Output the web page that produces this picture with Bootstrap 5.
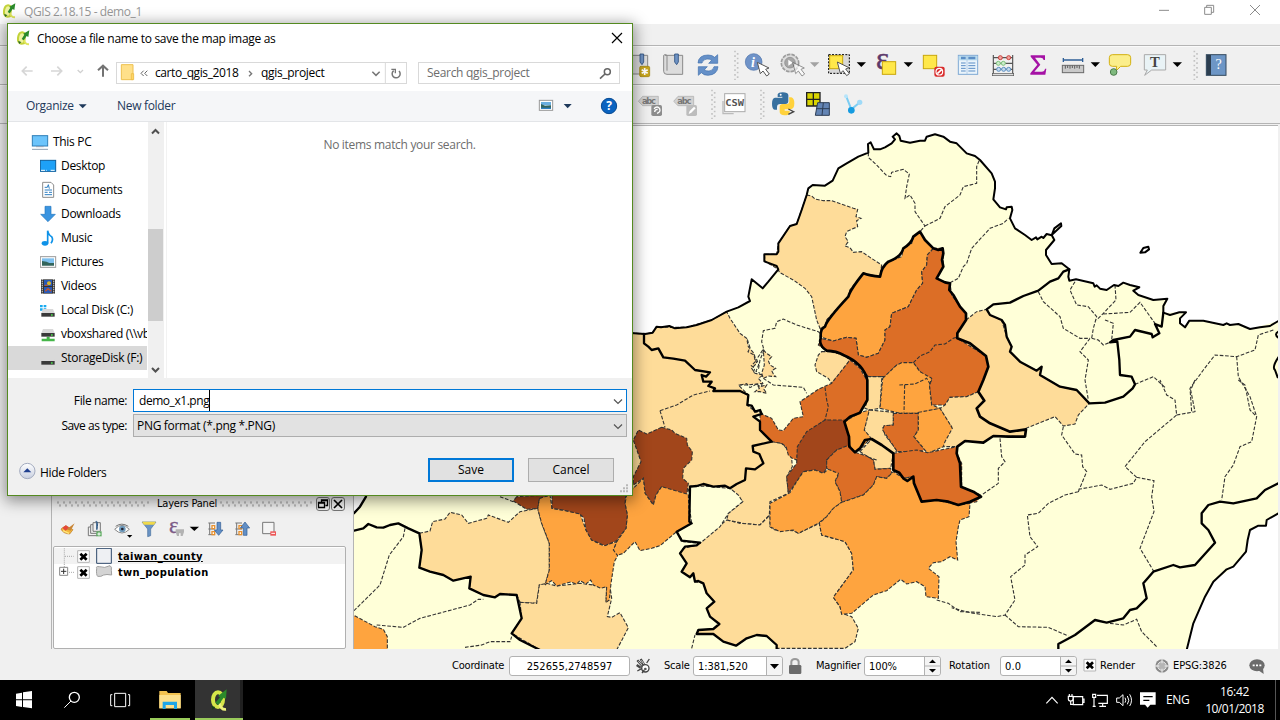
<!DOCTYPE html>
<html lang="en">
<head>
<meta charset="utf-8">
<title>QGIS 2.18.15 - demo_1</title>
<meta name="viewport" content="width=device-width, initial-scale=1">
<link href="https://cdn.jsdelivr.net/npm/bootstrap@5.3.0/dist/css/bootstrap.min.css" rel="stylesheet">
<style>
body{width:1280px;height:720px;overflow:hidden;background:#f0f0f0;color:#000;font:12px/16px "Open Sans","Noto Sans",sans-serif}
svg{display:block;flex:none}
.seg{letter-spacing:-.31px;white-space:nowrap}
.tah{font-family:"DejaVu Sans Condensed","DejaVu Sans",sans-serif;font-stretch:condensed;font-size:11px;letter-spacing:-.2px;white-space:nowrap}
.titlebar{height:24px;background:#fff;color:#999}
.menubar{height:22px;border-bottom:1px solid #b4b4b4}
.toolrow{height:39px;border-bottom:1px solid #b4b4b4;border-top:1px solid #fafafa;padding-left:633px}
.toolrow .btn{border:0;border-radius:0;padding:0;flex:none}
.mainrow{height:525px;padding-right:2px}
.leftcol{width:354px;padding-left:51px;border-right:1px solid #b4b4b4}
.dock{border-left:1px solid #b4b4b4;width:295px}
.docktitle{height:19px}
.dots{height:6px;flex:1 1 0;background-image:radial-gradient(circle at 2px 1.5px,#bbb 1px,transparent 1.3px),radial-gradient(circle at 4px 4.5px,#bbb 1px,transparent 1.3px);background-size:6px 6px}
.dockbtn{width:14px;height:14px;border:1px solid #777;border-radius:3px;margin-right:1px}
.tree{height:103px;width:293px;margin-left:1px;background:#fff;border:1px solid #b0b0b0;border-radius:2px;padding-top:1px}
.trow{height:16px;font-weight:700;padding-left:1px}
.trow .tah{letter-spacing:.33px;padding-top:1px}
.mapframe{border-top:1px solid #b4b4b4;margin-top:1px;background:#fff}
.status{height:31px;padding-top:2px}
.qbox{height:20px;background:#fff;border:1px solid #b2b2b2;border-radius:3px;line-height:19px}
.spin{width:16px;border-left:1px solid #b2b2b2;background:#f4f4f4;border-radius:0 3px 3px 0}
.task{height:40px;background:#000;color:#fff}
.run{border-bottom:2px solid #9acb5b}
.dlg{position:absolute;left:7px;top:23px;width:626px;height:473px;background:#fff;border:1px solid #548a20;box-shadow:0 3px 14px 2px rgba(0,0,0,.42)}
.dtitle{height:29px}
.dnav{height:38px;padding-left:12px}
.addr{height:22px;border:1px solid #d9d9d9;margin-top:1px}
.cmd{height:31px;background:#f5f6f8;border-bottom:1px solid #e3e5e8;color:#1e395b}
.dbody{height:256px}
.navtree{width:140px;padding-top:8px;overflow:hidden}
.nitem{height:24px;width:139px;padding-left:32px;overflow:hidden}
.sbar{width:16px;background:#f0f0f0}
.thumb{width:15px;height:92px;background:#cdcdcd;margin-top:107px}
.files{border-left:1px solid #f2f2f2;margin-left:2px}
.dfoot{height:117px;background:#f0f0f0}
.flabel{width:119px;text-align:right;margin-right:6px;letter-spacing:-.5px}
.fbox{width:494px;height:23px;line-height:20px}
.fname{border:1px solid #0078d7;background:#fff}
.ftype{border:1px solid #adadad;background:#e2e2e2}
.wbtn{width:86px;height:24px;background:#e1e1e1;border:1px solid #adadad;border-radius:0;padding:0;font-size:12px;line-height:20px;color:#000}
.wbtn.dflt{border:2px solid #0078d7}
.land{fill:#ffffd8}.c1{fill:#fedc99}.c2{fill:#fea43f}.c3{fill:#dc6e26}.c4{fill:#a2461b}
.reg path{stroke:#333;stroke-width:3.3;stroke-dasharray:11 5}
.dash{fill:none;stroke:#333;stroke-width:3.3;stroke-dasharray:11 5}
.thick{fill:none;stroke:#000;stroke-width:6;stroke-linejoin:round;stroke-linecap:round}
</style>
</head>
<body class="d-flex flex-column m-0">

<!-- main window title -->
<header class="titlebar d-flex align-items-center seg">
  <svg width="20" height="24" viewBox="0 0 60 72"><use href="#qlogo" x="-1" y="0"/></svg>
  <span class="ps-1" style="letter-spacing:-.4px">QGIS 2.18.15 - demo_1</span>
  <svg class="ms-auto" width="135" height="24" viewBox="585 0 405 72" fill="none" stroke="#8c8c8c" stroke-width="3"><path d="M627 31h30M764 22h20v21h-20zM770 22v-6h21v21h-7M900 15l30 30M930 15l-30 30"/></svg>
</header>
<div class="menubar"></div>

<!-- toolbars -->
<div class="toolrow d-flex">
  <button class="btn"><svg width="22" height="37" viewBox="9 141 66 111"><path d="M-10 166h63v56h-63z" fill="#ddd" stroke="#888" stroke-width="3"/><path d="M30 162h11v24l-5 8-6-8z" fill="#6f93c4" stroke="#2d4f80" stroke-width="2.5"/><rect x="29" y="199" width="30" height="31" rx="4" fill="#c8a51c" stroke="#9c7d08" stroke-width="2"/><path d="M44 204v21M35 209l18 11M53 209l-18 11" stroke="#fff" stroke-width="5"/></svg></button>
  <button class="btn"><svg width="35" height="37" viewBox="75 141 105 111"><path d="M105 166h53v57h-47q-10 0-10-9v-48q4-5 10 0v46" fill="#dcdcdc" stroke="#8a8a8a" stroke-width="3"/><path d="M134 162h11v24l-5 8-6-8z" fill="#6f93c4" stroke="#2d4f80" stroke-width="2.5"/></svg></button>
  <button class="btn"><svg width="40" height="37" viewBox="180 141 120 111"><g fill="#6590c8" stroke="#3f6fae" stroke-width="2"><path d="M204 189q2-24 30-24 13 0 20 7l9-8v26h-27l9-9q-7-5-14-4-13 1-15 12z"/><path d="M264 200q-2 24-30 26-13 0-20-8l-9 8v-26h27l-9 9q7 5 14 4 13-1 15-13z"/></g></svg></button>
  <svg width="12" height="37" viewBox="300 141 36 111"><use href="#grip" x="312" y="151"/></svg>
  <button class="btn"><svg width="33" height="37" viewBox="336 141 99 111"><circle cx="371" cy="186" r="25" fill="#6f93c8" stroke="#4d73ab" stroke-width="2"/><text x="363" y="200" font-family="Liberation Serif" font-weight="700" font-style="italic" font-size="42" fill="#fff">i</text><use href="#cur" x="382" y="187"/></svg></button>
  <button class="btn"><svg width="47" height="37" viewBox="435 141 141 111"><circle cx="480" cy="189" r="26" fill="#ddd" stroke="#9b9b9b" stroke-width="5" stroke-dasharray="11 3"/><circle cx="480" cy="188" r="16" fill="#a6a6a6" stroke="#888" stroke-width="2"/><path d="M475 179l13 9-13 9z" fill="#fff"/><g opacity=".6"><use href="#cur" x="488" y="187"/></g><path d="M540 187h28l-14 14z" fill="#a3a3a3"/></svg></button>
  <button class="btn"><svg width="47" height="37" viewBox="576 141 141 111"><rect x="596" y="164" width="62" height="56" fill="#d8d8d8" stroke="#000" stroke-width="3" stroke-dasharray="6 4"/><rect x="599" y="167" width="39" height="39" fill="#ffe84a" stroke="#c9a70c" stroke-width="3"/><use href="#cur" x="622" y="186"/><path d="M680 187h28l-14 14z"/></svg></button>
  <button class="btn"><svg width="47" height="37" viewBox="717 141 141 111"><text x="738" y="206" font-family="Liberation Serif" font-size="92" fill="#5d3a6b" stroke="#5d3a6b" stroke-width="1.500">ε</text><rect x="757" y="185" width="40" height="38" fill="#ffe84a" stroke="#c9a70c" stroke-width="3"/><path d="M821 187h28l-14 14z"/></svg></button>
  <button class="btn"><svg width="35" height="37" viewBox="858 141 105 111"><rect x="880" y="166" width="40" height="40" fill="#ffe84a" stroke="#c9a70c" stroke-width="3"/><rect x="913" y="200" width="31" height="30" rx="6" fill="#d92b2b"/><circle cx="928" cy="215" r="10" fill="none" stroke="#fff" stroke-width="3.5"/><path d="M922 221l13-12" stroke="#fff" stroke-width="5"/></svg></button>
  <button class="btn"><svg width="35" height="37" viewBox="3 141 105 111"><rect x="25" y="166" width="58" height="57" fill="#eaf4fb" stroke="#7fa9d4" stroke-width="3"/><path d="M26 168h56v13H26z" fill="#b9dcee"/><path d="M33 174h14M55 174h21" stroke="#5b8dc5" stroke-width="7"/><path d="M51 168v54" stroke="#9cc0e2" stroke-width="2"/><path d="M33 189h14M33 197h14M33 205h14M33 213h14M55 189h21M55 197h21M55 205h21M55 213h21" stroke="#5b8dc5" stroke-width="3"/></svg></button>
  <button class="btn"><svg width="35" height="37" viewBox="108 141 105 111"><path d="M130 165v57M188 165v57M130 173h58M130 190h58M130 208h58" stroke="#555" stroke-width="3.5"/><rect x="127" y="220" width="64" height="7" fill="#ddd" stroke="#555" stroke-width="2"/><g stroke-width="3"><g fill="#f2a3a0" stroke="#c9413b"><circle cx="151" cy="173" r="6"/><circle cx="176" cy="173" r="6"/></g><g fill="#cdeccb" stroke="#7dc37c"><circle cx="145" cy="190" r="6"/><circle cx="160" cy="190" r="6"/></g><g fill="#c3d9ee" stroke="#5b8fc2"><circle cx="146" cy="208" r="6"/><circle cx="161" cy="208" r="6"/><circle cx="176" cy="208" r="6"/></g></g></svg></button>
  <button class="btn"><svg width="35" height="37" viewBox="213 141 105 111"><path d="M242 166h43v14h-4q-2-7-9-7h-17l16 21-18 21h22q9 0 10-9h4l-3 18h-45v-4l21-26-20-24z" fill="#a512a5"/></svg></button>
  <button class="btn"><svg width="47" height="37" viewBox="318 141 141 111"><path d="M340 174v12M398 174v12M340 180h58" stroke="#2f5f96" stroke-width="4"/><rect x="337" y="196" width="64" height="22" fill="#c9c9c9" stroke="#6a6a6a" stroke-width="3"/><path d="M346 197v9M353 197v7M360 197v9M367 197v7M374 197v9M381 197v7M388 197v9" stroke="#444" stroke-width="2.5"/><path d="M422 187h28l-14 14z"/></svg></button>
  <button class="btn"><svg width="35" height="37" viewBox="459 141 105 111"><path d="M487 164h46q9 0 9 9v17q0 9-9 9h-21l-14 14 2-14h-13q-9 0-9-9v-17q0-9 9-9z" fill="#fbee8b" stroke="#d3b00f" stroke-width="3"/><circle cx="491" cy="216" r="10" fill="#7fb97e" stroke="#4b7c4b" stroke-width="3"/></svg></button>
  <button class="btn"><svg width="47" height="37" viewBox="564 141 141 111"><path d="M583 164h64v46h-42l-21 16 8-16h-9z" fill="#e9f3f6" stroke="#a9a9a9" stroke-width="3"/><text x="615" y="201" text-anchor="middle" font-family="Liberation Serif" font-weight="700" font-size="44" fill="#444">T</text><path d="M668 187h28l-14 14z"/></svg></button>
  <svg width="15" height="37" viewBox="705 141 45 111"><use href="#grip" x="730" y="151"/></svg>
  <button class="btn"><svg width="35" height="37" viewBox="750 141 105 111"><rect x="769" y="164" width="59" height="62" fill="#6d96c6" stroke="#34495e" stroke-width="3"/><path d="M770 165h13v60h-13z" fill="#2c3e50"/><text x="806" y="208" text-anchor="middle" font-family="Liberation Serif" font-size="42" fill="#fff">?</text></svg></button>
</div>
<div class="toolrow d-flex">
  <button class="btn"><svg width="33" height="37" viewBox="9 258 99 111"><path d="M25 304l13-15h47v28H38z" fill="#d2d2d2" stroke="#aaa" stroke-width="2"/><text x="36" y="312" font-family="DejaVu Sans" font-weight="700" font-size="25" textLength="42" fill="#777">abc</text><rect x="64" y="315" width="32" height="33" rx="5" fill="#8d8d8d"/><path d="M72 326q10-10 17 0 4 10-8 14M74 336q0-8 9-8" fill="none" stroke="#fff" stroke-width="4"/></svg></button>
  <button class="btn"><svg width="42" height="37" viewBox="108 258 126 111"><path d="M131 304l13-15h47v28h-47z" fill="#d2d2d2" stroke="#aaa" stroke-width="2"/><text x="142" y="312" font-family="DejaVu Sans" font-weight="700" font-size="25" textLength="42" fill="#777">abc</text><rect x="169" y="315" width="32" height="33" rx="5" fill="#bdbdbd"/><path d="M176 342l3-9 13-13 5 5-13 13z" fill="#fff"/></svg></button>
  <svg width="12" height="37" viewBox="234 258 36 111"><use href="#grip" x="243" y="268"/></svg>
  <button class="btn"><svg width="38" height="37" viewBox="270 258 114 111"><path d="M279 303v38h32" fill="none" stroke="#bbb" stroke-width="4"/><rect x="284" y="281" width="61" height="54" fill="#fff" stroke="#aaa" stroke-width="3"/><text x="286" y="318" font-family="DejaVu Sans Mono" font-weight="700" font-size="28" textLength="56" lengthAdjust="spacingAndGlyphs" fill="#555">CSW</text></svg></button>
  <svg width="10" height="37" viewBox="384 258 30 111"><use href="#grip" x="390" y="268"/></svg>
  <button class="btn"><svg width="35" height="37" viewBox="414 258 105 111"><path d="M443 291v-8q2-6 15-6 16 0 17 8v18q0 9-9 9h-15q-10 0-10 10v7h-7q-8-2-8-18 0-17 9-18h22v-3z" fill="#37709f"/><path d="M477 292h7q9 3 9 18 0 16-10 18h-19v4h15v7q-2 7-15 7-15-1-15-10v-16q0-8 9-8h12q8 0 8-10z" fill="#ffd23c"/><circle cx="452" cy="284" r="3" fill="#fff"/><path d="M475 327l16 8-16 8" fill="none" stroke="#444" stroke-width="4"/></svg></button>
  <button class="btn"><svg width="35" height="37" viewBox="519 258 105 111"><path d="M530 278h40v40h-40z" fill="#d9d400" stroke="#222" stroke-width="4"/><path d="M550 278v40M530 298h40" stroke="#222" stroke-width="4"/><path d="M563 308h35v38h-42z" fill="#6384b4" stroke="#2d3d55" stroke-width="3"/><path d="M580 308l-4 38M559 326h40" stroke="#2d3d55" stroke-width="3"/></svg></button>
  <button class="btn"><svg width="35" height="37" viewBox="624 258 105 111"><path d="M649 290l15 38 24-20" fill="none" stroke="#7ccdf3" stroke-width="6"/><circle cx="648" cy="289" r="6" fill="#b6e4fa"/><circle cx="689" cy="307" r="8" fill="#9edaf8"/><circle cx="664" cy="331" r="10" fill="#159be0"/></svg></button>
</div>

<!-- layers dock and map canvas -->
<main class="mainrow d-flex">
  <aside class="leftcol d-flex flex-column justify-content-end">
    <div class="dock">
      <div class="docktitle d-flex align-items-center ps-1">
        <span class="dots"></span><span class="tah px-2" style="width:70px">Layers Panel</span><span class="dots"></span>
        <span class="dockbtn ms-1"><svg width="12" height="12" viewBox="0 0 12 12" fill="none" stroke="#000"><path d="M4.500 4V2h6v5.500h-2M1.500 4.500h6v5h-6zM1.500 5h6M4.500 2.500h6" stroke-width="1.300"/></svg></span>
        <span class="dockbtn"><svg width="12" height="12" viewBox="0 0 12 12"><path d="M2 2l8 8M10 2l-8 8" stroke="#000" stroke-width="1.700"/></svg></span>
      </div>
      <svg width="280" height="33" viewBox="156 69 840 99">
        <path d="M183 117l14-10 22 12-10 13q-20-1-26-15z" fill="#f2b53c" stroke="#b8751f" stroke-width="2"/><path d="M187 113l11-7 10 8-12 8z" fill="#e4473a"/><path d="M200 118l24-18-12 22z" fill="#c98535"/><path d="M189 122l18 8" stroke="#ffe87a" stroke-width="4"/>
        <g fill="none" stroke="#777" stroke-width="3"><path d="M272 111h-7v26h26v-6M279 104h-7v26h25"/><path d="M279 98h22v26h-22z"/><path d="M290 119V98q-5-5 0-4 5 2 1 25" stroke="#345c86"/></g><path d="M289 124h16v15h-16z" fill="#62ad65"/><path d="M297 127v10M292 132h10" stroke="#fff" stroke-width="3"/>
        <path d="M344 118q22-24 44 0-22 22-44 0z" fill="#fff" stroke="#888" stroke-width="3"/><circle cx="367" cy="117" r="10" fill="#6f9abb"/><circle cx="367" cy="117" r="4" fill="#223"/><path d="M347 109q18-13 38 0" stroke="#777" fill="none" stroke-width="3"/><path d="M381 135h16l-8 8z"/>
        <path d="M426 96h42l-16 21v20l-9 3v-23z" fill="#6a93c4" stroke="#4a719f" stroke-width="2"/><path d="M426 95h42l-6 9h-30z" fill="#f0d94a"/>
        <text x="507" y="128" font-family="Liberation Serif" font-size="68" fill="#7b5a86" stroke="#7b5a86">ε</text><path d="M527 118h25v8l-4 12h-6v-8h-5v8h-6l-4-12z" fill="#b3b3b3"/><path d="M569 110h28l-14 13z"/>
        <path d="M625 99h20M625 117h20M625 134h20M629 99v35" stroke="#777" stroke-width="3"/><path d="M636 107h8v9h-8zM636 125h8v9h-8z" fill="#fff" stroke="#e8912f" stroke-width="4"/><path d="M651 97h11v23h7l-13 16-13-16h8z" fill="#628fc6" stroke="#2f5b92" stroke-width="2"/>
        <path d="M706 99h20M706 117h20M706 134h20M710 99v35" stroke="#777" stroke-width="3"/><path d="M717 107h8v9h-8zM717 125h8v9h-8z" fill="#fff" stroke="#e8912f" stroke-width="4"/><path d="M730 136h11v-22h8l-14-18-14 18h9z" fill="#628fc6" stroke="#2f5b92" stroke-width="2"/>
        <path d="M788 97h34v34h-34z" fill="#f4f4f4" stroke="#777" stroke-width="3"/><path d="M811 124h17v13h-17z" fill="#ee5656"/><path d="M814 130h11" stroke="#fff" stroke-width="3"/>
      </svg>
      <div class="tree">
        <div class="trow d-flex align-items-center" style="background:#f2f2f2"><svg width="63" height="16" viewBox="165 171 189 48"><path d="M193 172v47M195 196h26" stroke="#999" stroke-width="2.500" stroke-dasharray="3 3"/><use href="#chk" x="232" y="178"/><path d="M290 172h44v45h-44z" fill="#eef0f3" stroke="#2f4a6b" stroke-width="3"/></svg><u class="tah">taiwan_county</u></div>
        <div class="trow d-flex align-items-center"><svg width="63" height="16" viewBox="165 219 189 48"><path d="M193 219v10M207 244h15" stroke="#999" stroke-width="2.500" stroke-dasharray="3 3"/><path d="M179 229h24v24h-24z" fill="#fff" stroke="#888" stroke-width="3"/><path d="M183 241h16M191 233v16" stroke="#333" stroke-width="3"/><use href="#chk" x="232" y="226"/><path d="M290 232q-3-7 8-5 16 6 32-3 6 2 4 14l1 14q-16-3-24 0-8 6-18 4-5-5-3-24z" fill="#d4d4d4" stroke="#a0a0a0" stroke-width="3"/></svg><span class="tah">twn_population</span></div>
      </div>
    </div>
  </aside>

  <section class="mapframe flex-fill">
  <svg width="924" height="523" viewBox="-828 18 2772 1569">
    <g>
      <path class="land" d="M-828 1180L-810 1160-792 1130 0 637 45 642 68 638 80 620 118 622 170 622 200 615 245 600 290 575 360 543 355 530 365 478 398 505 445 448 403 424V403H440L445 370 480 318 500 312 530 225 548 195 585 197 608 182 625 145 685 110 715 98 714 72 732 88 765 82 795 58 800 40 812 62 840 68 885 62 915 43 960 65 1000 85V1590H-828Z"/>
      <path class="land" transform="translate(960)" d="M0 65L20 70 50 100 90 120 125 160 135 185 130 238 150 262 185 260 180 295 195 325 245 360 305 342 313 325 333 310 305 345 313 360 288 390 288 405 305 432 335 430 358 448 358 482 430 490 440 502 470 510 520 488 568 502 550 512 565 525 610 540 652 538 640 578 708 577 690 595 690 610 705 622 718 602 760 602 820 615 865 612 900 627 984 603V1180L950 1200 948 1217 925 1217 900 1230 888 1295 850 1340 790 1385 765 1430 730 1510 710 1590H0Z"/>
    </g>
    <g class="reg">
      <path class="c1" d="M530 225L545 228 555 237 580 242 605 242 640 254 670 265 683 268 678 290 693 295 680 302 683 320 665 328 650 335 645 350 655 365 645 378 660 383 670 397 695 395 720 412 755 435 750 470 720 465 700 460 660 510 655 530 590 600 585 622 570 625 560 600 545 530 525 505 490 480 448 457 445 448 405 424 403 403H440L445 370 480 318 500 312Z"/>
      <path class="c1" d="M-30 637L45 642 68 638 80 620 118 622 170 622 245 600 290 575 300 595 330 640 350 655 355 680 372 700 380 730 365 745 375 760 400 765 385 775 398 790 350 795 325 795 355 825 352 855 375 875 395 880 370 890 390 905V930L425 965 455 970 470 985 485 1015 487 1040 470 1070 475 1120 420 1145 418 1185 390 1215 340 1210 290 1200 295 1180 338 1145 300 1105 220 1100 180 1098 170 1125-30 1100Z"/>
      <path class="c1" d="M400 690L410 700 425 710 415 722 420 735 437 745 425 752 430 762 437 770 415 768 400 775 395 760 403 735ZM575 695H620L660 718 640 750 625 765 605 790 595 775 560 755 555 735 565 705Z"/>
      <path class="dash" d="M352 658l8 25-6 12 18 10 4 20-12 12 10 8-4 14M398 690l-18 28 6 16-8 20 12 6M330 795l20-4 10 12 18-10 14 10 6-16"/>
      <g transform="translate(90 780)">
        <path class="c1" d="M200 420L240 430 300 435 330 405V440L345 450 400 452 415 460 478 430 485 465 555 485 575 520 580 570 520 652 540 680 545 700 575 710 595 745 585 785 555 805H350V795L320 768 290 765 260 775 228 797 190 785 160 762 110 762 115 750 160 747 178 732 150 710 140 685 163 665 140 640 130 610 105 605 100 590 90 592 65 575 80 550 60 520 70 505 110 495Z"/>
        <path class="land" d="M90 320L130 318 210 325 235 345 248 365 205 400 180 440 120 490 70 485 50 455 95 430 88 380Z"/>
        <path class="c1" d="M290 12L300 20 320 15 312 28 320 40 300 35 285 35 298 25Z"/>
        <path class="c3" d="M300 100L335 115 355 150 370 152 400 115 430 110 420 65 450 45 475 28 515 10 550-35 570-60 600-35 620 0 622 60 600 98 570 110 553 125 495 120 455 150 415 200 410 240 397 235 385 225 378 200 365 190 335 185 300 150Z"/>
        <path class="dash" d="M495 22L500 60 505 80 495 120"/>
        <path class="c4" d="M553 120L567 170 568 200 530 210 500 240V265L490 280 465 270 430 275 410 305 385 340 380 290 410 250 412 200 440 155 495 120Z"/>
        <path class="c4" d="M5 142L35 150 45 160 80 175 82 195 97 215 95 240 70 265 68 295 85 310 80 343 50 340 5 320-12 345-20 375-45 340-50 295-80 315V290L-57 245-80 180-65 150-40 162Z"/>
      </g>
      <path class="c2" d="M572 625L585 620 590 600 655 530 660 510 700 460 750 470 755 440 775 425 815 410 820 385 845 370 850 350 870 335 885 360 910 385 892 405 890 435 875 455 878 490 860 510 835 560 785 580 780 620 765 630V660L745 700 710 712 685 705 678 655 650 652 610 663 575 652Z"/>
      <path class="c3" d="M910 385H938L940 440 920 475 945 487 960 490 965 525 990 560 1008 580V600L982 640 1020 675 1068 708 1075 740 1060 780 1045 815 1010 830 960 832 945 855 905 855 898 795 905 780 880 770 870 755 850 728 800 735 765 770 715 770 690 740 640 705 590 692 565 675 572 655 610 663 650 652 678 655 685 705 710 712 745 700 765 660V630L780 620 785 580 835 560 860 510 878 490 875 455 890 435 892 405Z"/>
      <path class="dash" d="M850 728L870 708 900 695 915 675 945 672 970 655 985 650"/>
      <path class="c1" d="M1008 600L1040 575 1070 568 1080 585 1115 600 1130 650 1145 680 1140 695 1170 725 1220 752 1235 740 1230 765 1290 800 1340 810 1378 850 1345 885 1335 912 1300 918 1275 890 1188 925 1185 950 1090 948 1060 968 1005 963 982 980 930 980 945 950 965 920 950 900 930 865 945 855 960 832 1010 830 1045 815 1060 780 1075 740 1068 708 982 655V640Z"/>
      <g transform="translate(90 780)">
        <path class="c1" d="M622-10H665V0L660 85 628 90 615 85 622 60Z"/>
        <path class="c2" d="M668-5L710-45 725-52 760-52 780-25 815-5 808 15 815 75 840 85 775 100 720 100 660 85Z"/>
        <path class="c2" d="M553 125L600 98 628 90 625 110 613 150 635 170 600 210 585 217 568 200 567 170Z"/>
        <path class="c1" d="M628 90L700 97V135L668 140 675 165 712 212 700 220 665 195 635 177 613 150Z"/>
        <path class="c3" d="M700 100H775V150L762 170 795 210 770 215 712 215 668 150 672 137 700 135Z"/>
        <path class="c2" d="M775 97L840 85 862 120 877 145 855 185 850 200 803 220 762 170 775 150Z"/>
        <path class="c3" d="M700 220L770 210 803 218 890 200V220L905 250V320L962 345 950 365 895 375 830 360 785 365 762 310 760 290 730 295 700 270Z"/>
        <path class="c1" d="M600 215L635 177 665 195 700 220 692 265 645 268 640 240 620 228Z"/>
        <path class="c3" d="M500 240L530 210 568 195 585 217 620 228 640 240 645 268 692 265 695 280 680 295 650 290 640 315 610 345 545 367 540 335 525 305 535 285 500 265Z"/>
        <path class="c2" d="M430 275L465 270 490 280 505 268 535 280 525 305 540 335 545 367 520 385 500 410 475 430 415 460 400 450 360 455 330 440V370L390 338 410 305Z"/>
        <path class="c2" d="M545 367L610 345 640 315 650 290 680 295 700 275 730 295 760 290 762 310 785 365 830 360 895 375 930 370 927 410 900 420 895 440 888 485 893 540 870 530 845 545 820 548 805 565 837 590 835 655 798 650 795 620 770 605 740 612 722 598 680 632 640 645 575 700 545 703 540 680 520 652 580 570 575 520 555 485 485 465 478 430 500 410 520 385Z"/>
        <path class="dash" d="M0 92L50 75 100 45 150 33M0 92L15 142M734 15L732 97M718 15L765 12 800-5 812 15M95 805L105 765M830 660L865 670 900 695 960 697M650 240L625 232"/>
      </g>
      <g transform="translate(-840 750)">
        <path class="c1" d="M208 490L240 483 248 455 285 447 300 427 335 435 355 460 410 445 415 435 475 457 510 425 563 415 575 460 598 520V600L585 645H568L560 700 510 697 500 675 450 672 435 682 400 675 358 655 362 620 310 632 280 615 240 605 208 593 215 540Z"/>
        <path class="c1" d="M510 697L560 700 568 645 590 640 620 648 690 640 770 650 768 697 780 650 785 685 772 740 785 742 810 728 835 773 800 840H570L485 790 515 745Z"/>
        <path class="c2" d="M830 375L880 325 885 370 910 405 918 375 935 350 1015 373 1018 455 1025 460 980 485 930 527 905 535 870 542 855 515 820 550 800 557 790 540 800 515 828 475 832 435 825 400Z"/>
        <path class="c2" d="M568 385L600 375 606 415 690 430 708 480 725 510 760 527 800 515 790 540 803 557 793 575 783 640 778 690 768 697 770 650 752 655 730 645 722 630 708 642 690 632 680 642 662 636 640 642 620 648 605 632 590 640 585 645 598 600V520L575 460 563 415Z"/>
        <path class="c4" d="M606 375V415L640 420 690 432 702 445 708 480 725 510 765 527 800 512 828 475 832 435 825 400 828 370ZM500 380L490 393 530 418 563 415 568 385 600 375Z"/>
        <path class="c2" d="M0 730L75 770 100 778 112 800V840H0Z"/>
        <path class="dash" d="M165 475L160 500 118 555 90 645 12 722M80 765L160 772 210 745 360 705 385 688 400 688M345 832L395 825 420 815 480 815 485 800M450 380L490 395"/>
      </g>
    </g>
    <g class="dash">
      <path d="M715 98L715 112 740 135 770 167 782 170 785 157 820 148 838 162 830 200 825 235 840 225 855 250V275L885 318 870 335M885 318L930 295 945 260 990 225 1000 200 1040 190 1040 140 1048 120M960 488L985 475 1000 440 1010 430 1025 385 1080 325 1120 310 1135 295M1225 515L1240 545 1290 590 1300 625 1350 655 1380 655M1335 485L1320 510 1340 555 1375 560 1400 590 1390 625 1385 655M1455 495L1458 540 1420 580 1400 600M1420 582L1500 577 1530 547 1575 610M1425 600L1450 610 1445 660M1380 655L1350 695 1375 720 1365 780 1375 840M1385 655L1405 660 1420 675 1445 665M1515 793L1570 770 1605 802M1930 630L1885 645 1875 690 1820 710 1755 705 1720 750 1680 805 1685 875M1820 710L1825 770 1860 830 1880 890"/>
      <path d="M570 640L565 635 500 615 460 597 440 605 435 625 400 632 395 665 402 690 390 720 385 750M400 775L430 795 520 802 530 820"/>
      <g transform="translate(960 780)"><path d="M340 140L335 165 375 222 395 225 398 260 410 275 385 335M150 175L155 230 165 245 145 265V310L95 345M385 328L430 320 455 315 480 328 550 310 560 292 525 260 585 185 680 105 675 60 650 45 630 0M680 105L735 95 722 30 735 0M865 0L885 15 900 90 920 110 905 185 870 200 850 255 825 290 815 360M560 292L612 302 605 350 612 395 570 505 612 575M385 335L345 345 295 370 265 400 232 405 240 470 263 500 225 525 225 555 182 590 195 660 165 705 140 710 60 698 5 683M165 705L205 740 295 742 355 768M480 730L520 735 560 718 575 755 620 800"/></g>
    </g>
    <g class="thick">
      <path stroke-width="6" d="M-30 637L45 642 68 638 80 620 93 622 118 618 135 625 170 622 200 615 245 600 290 575 325 562 360 543 355 530 365 478 398 505 415 485 445 448 440 438 403 424V403H440L445 395V370L480 318 500 312 515 270 530 225 535 205 548 195 585 197 608 182 625 145 650 130 685 110 715 98 714 72 722 67 732 88 750 88 765 82 785 70 795 58 788 50 800 40 808 48 812 62 840 68 870 62 885 62 890 50 915 43 940 50 960 65 980 70 1010 100 1035 108 1050 120 1085 160 1095 185 1095 205 1090 238 1110 262 1128 268 1130 262 1145 260 1147 270 1140 295 1155 325 1185 345 1205 360 1218 352 1222 358 1235 350 1240 354 1250 342 1265 346 1273 325 1293 310 1294 318 1265 345 1273 360 1248 390 1248 405 1265 432 1295 430 1318 448 1315 470 1318 482 1338 478 1390 490 1394 500 1400 496 1410 506 1430 510 1452 495 1465 498 1480 488 1500 495 1528 502 1510 512 1525 525 1570 540 1612 536 1600 558 1600 578 1620 585 1648 577 1668 577 1650 595 1650 610 1665 622 1678 602 1720 602 1780 615 1790 610 1800 615 1825 612 1860 627 1890 622 1920 618 1945 603M1945 1180L1910 1200 1908 1217 1885 1217 1860 1230 1853 1260 1848 1295 1810 1340 1790 1348 1750 1385 1725 1430 1690 1510 1670 1590M1531 398L1540 384 1555 380 1557 388 1545 397ZM1945 635q-14 8 0 18M1945 712q-20 30-10 38l8 22"/>
      <path stroke-width="7" d="M42 642V670L55 680 65 690 85 685 100 712 130 716 165 722 195 750 240 757 228 770 215 765 220 785 245 785 235 798 255 805 250 813H330L355 825 352 855 365 857 375 875 390 870 395 882 370 890 390 905V930L425 965 368 978 370 995 388 1002 400 1030 375 1048 348 1045 345 1080 320 1092 300 1105 285 1097 250 1100 220 1092 200 1098 180 1100 178 1205 185 1210 140 1235 155 1262 210 1268 200 1276 165 1280 150 1300 170 1330 155 1355 180 1372 190 1360 195 1385 205 1383 220 1390 230 1420 253 1445 230 1465 240 1490 268 1512 250 1527 205 1530 200 1542H250L280 1565 318 1577 350 1555 380 1545 410 1548 440 1575V1590"/>
      <path stroke-width="8" d="M870 335L885 360 910 385 925 390 938 385 940 400 936 420 940 440 920 475 945 487 960 490 958 510 970 525 990 560 1008 580V600L982 640V655L1020 670 1068 708 1075 740 1060 780 1045 815 1063 842 1040 865 1050 890 1080 910 1140 935 1188 928 1185 950 1135 950 1090 948 1060 968 1005 963 982 980 980 1000 990 1030 993 1100 1030 1115 1053 1130 1020 1145 985 1155 955 1145 920 1140 875 1145 852 1090 850 1070 832 1083 820 1075 808 1058 790 1050 790 1000 755 975 725 957 705 960 690 985 675 997 658 980 657 950 643 905 660 890 690 878 712 840 712 780Q700 730 640 705 620 693 590 692 565 675 572 655 570 625 585 620 590 600 655 530 660 510 700 460 720 468 750 470 755 440 775 425 815 410 820 385 845 370 850 350Z"/>
      <path stroke-width="7" d="M1318 448L1300 455 1285 475 1260 485 1225 512 1180 528 1140 548 1090 553 1070 568 1080 585 1115 600 1125 615 1130 650 1145 680 1140 695 1170 725 1220 752 1235 740 1230 765 1290 800 1340 810 1378 850 1425 848 1480 830 1508 805 1515 793 1505 770 1470 765 1468 720 1462 665 1440 667 1450 660 1500 650 1515 630 1565 642 1568 652 1588 640 1575 612 1595 620 1600 578M1285 1590V1572L1335 1545 1395 1500 1430 1508 1480 1495 1500 1470 1520 1465 1550 1435 1540 1390 1570 1355 1630 1335 1650 1342 1695 1335 1755 1268 1735 1230 1715 1210V1180L1735 1155 1770 1145 1810 1150 1880 1135 1905 1110 1945 1090M-828 1232L-800 1225-785 1212-760 1222-740 1223-720 1215-695 1210-665 1225-632 1240-625 1290-632 1343-600 1355-560 1365-530 1382-478 1370-482 1405-440 1425-405 1432-390 1422-340 1425-325 1495-355 1540-330 1560-270 1590M-828 1180L-810 1160-792 1130"/>
    </g>
  </svg>
  </section>
</main>

<!-- status bar -->
<footer class="status d-flex align-items-center tah">
  <span style="margin-left:452px;width:57px">Coordinate</span>
  <span class="qbox text-center" style="width:121px;letter-spacing:.05px">252655,2748597</span>
  <svg class="ms-1" width="30" height="20" viewBox="582 45 90 60"><path d="M592 58l18 20M602 54l12 20M590 72l12 8" stroke="#444" stroke-width="7"/><path d="M595 61l14 15M604 58l10 14" stroke="#eee" stroke-width="2.500"/><circle cx="616" cy="82" r="11" fill="#fff" stroke="#444" stroke-width="4"/><circle cx="616" cy="84" r="4" fill="#555"/><path d="M592 90l14-8M606 96l7-9M620 66l8-12" stroke="#444" stroke-width="4"/></svg>
  <span style="width:29px">Scale</span>
  <span class="qbox d-flex ps-1" style="width:90px;letter-spacing:-.1px"><span class="flex-fill">1:381,520</span><span class="spin"><svg width="15" height="18" viewBox="0 0 15 18"><path d="M3 7h9l-4.500 5z"/></svg></span></span>
  <svg width="33" height="20" viewBox="1029 45 99 60"><path d="M1054 72V62q1-8 11-8t11 8v10" fill="none" stroke="#999" stroke-width="6"/><rect x="1047" y="72" width="37" height="27" rx="4" fill="#6b6b6b"/></svg>
  <span style="width:48px">Magnifier</span>
  <span class="qbox d-flex ps-1" style="width:77px;letter-spacing:-.1px"><span class="flex-fill">100%</span><span class="spin"><svg width="15" height="18" viewBox="0 0 15 18"><path d="M0 9h15" stroke="#b2b2b2"/><path d="M4 6h7L7.500 2.500zM4 12h7l-3.500 3.500z"/></svg></span></span>
  <span style="width:51px;margin-left:8px;letter-spacing:-.05px">Rotation</span>
  <span class="qbox d-flex ps-1" style="width:77px;letter-spacing:.2px"><span class="flex-fill">0.0</span><span class="spin"><svg width="15" height="18" viewBox="0 0 15 18"><path d="M0 9h15" stroke="#b2b2b2"/><path d="M4 6h7L7.500 2.500zM4 12h7l-3.500 3.500z"/></svg></span></span>
  <svg width="23" height="20" viewBox="380 825 69 60"><use href="#chk" x="400" y="834"/></svg>
  <span style="width:53px;letter-spacing:0">Render</span>
  <svg width="20" height="20" viewBox="609 825 60 60"><circle cx="636" cy="855" r="20" fill="#8a8a8a"/><circle cx="636" cy="855" r="13" fill="#b5b5b5" stroke="#e5e5e5" stroke-width="3"/><path d="M636 833v14M636 863v14M614 855h14M644 855h14" stroke="#ddd" stroke-width="4"/></svg>
  <span style="width:75px;letter-spacing:-.1px">EPSG:3826</span>
  <svg width="18" height="20" viewBox="894 825 54 60"><ellipse cx="921" cy="853" rx="23" ry="18" fill="#6c6c6c"/><path d="M925 868l16 11-2-18z" fill="#6c6c6c"/><path d="M908 853h6M918 853h6M928 853h6" stroke="#fff" stroke-width="5"/></svg>
</footer>

<!-- taskbar -->
<div class="task d-flex">
  <svg width="150" height="40" viewBox="0 570 450 120"><path d="M48 611l18-3v20H48zM69 607l27-4v25H69zM48 631h18v20l-18-3zM69 631h27v24l-27-4z" fill="#fff"/><g fill="none" stroke="#fff" stroke-width="4"><circle cx="223" cy="622" r="15"/><path d="M213 633l-20 20M344 610h33v40h-33zM337 614h-5v33h5M384 614h5v33h-5" stroke-width="3"/></g></svg>
  <div class="run" style="width:40px"><svg width="40" height="38" viewBox="450 570 120 114"><path d="M478 603h22l4 6h38v46h-64z" fill="#f3c24f"/><path d="M478 615h64v40h-64z" fill="#fde08c"/><path d="M488 657v-22h43v22h-9v-12h-25v12z" fill="#1ea6e8"/></svg></div>
  <div class="run" style="width:45px;margin-left:5px;background:#333"><svg width="45" height="38" viewBox="585 570 135 114"><ellipse cx="654" cy="629" rx="15" ry="22" fill="none" stroke="#d6e64a" stroke-width="12"/><path d="M658 640q5 20 20 18" fill="none" stroke="#eef17c" stroke-width="8"/><path d="M646 638l14-16-6-4 26-20-2 28-7-3-16 22z" fill="#2b8a2b"/><path d="M634 648l12 3-8 9z" fill="#163f16"/></svg></div>
  <div class="run" style="width:3px;background:#202020"></div>
  <svg class="ms-auto" width="124" height="40" viewBox="276 900 372 120" fill="none" stroke="#fff" stroke-width="3.500"><path d="M289 970l17-18 17 18M370 950h28v24h-28zM398 957h4v10h-4M355 949h14v8q0 6-7 6t-7-6zM358 942v7M366 942v7M362 963v10h8"/><path d="M441 946h31v24h-27M428 943h9v9h-9zM432 952v28M428 979h9M458 970v8M448 979h20"/><path d="M500 954h8l11-10v33l-11-10h-8zM525 953q5 8 0 15M532 948q9 13 0 25M539 943q11 18 0 35" stroke-width="3"/><path d="M570 937h47v37h-16l-8 9-8-9h-15z" fill="#fff" stroke="none"/><path d="M580 950h28M580 961h18" stroke="#000"/></svg>
  <span class="seg align-self-center" style="width:28px">ENG</span>
  <div class="seg text-center d-flex flex-column justify-content-center" style="width:81px;line-height:17px"><span>16:42</span><span style="letter-spacing:-.5px">10/01/2018</span></div>
  <div style="width:5px;border-left:1px solid #555"></div>
</div>

<!-- save dialog -->
<section class="dlg seg" role="dialog">
  <div class="dtitle d-flex align-items-center">
    <svg width="29" height="29" viewBox="24 72 87 87"><use href="#qlogo" x="41" y="81"/></svg>
    <span>Choose a file name to save the map image as</span>
    <svg class="ms-auto" width="24" height="29" viewBox="864 72 72 87"><path d="M876 99l30 30M906 99l-30 30" stroke="#000" stroke-width="3.500"/></svg>
  </div>
  <div class="dnav d-flex align-items-center">
    <svg width="96" height="38" viewBox="60 159 288 114" fill="none"><path d="M98 213H66M80 200l-13 13 13 13M153 213h32M172 200l13 13-13 13" stroke="#d6d6d6" stroke-width="5"/><path d="M233 210l8 8 8-8" stroke="#d0d0d0" stroke-width="4"/><path d="M309 230v-32M294 211l15-14 15 14" stroke="#737373" stroke-width="6"/></svg>
    <div class="addr d-flex align-items-center" style="width:291px">
      <svg width="38" height="20" viewBox="351 186 114 60"><path d="M364 191h35v45h-35z" fill="#ffe08a" stroke="#eec04f" stroke-width="3"/><path d="M394 218h7v18h-7z" fill="#ffd667" stroke="#e8b83f" stroke-width="2"/><path d="M431 209l-8 8 8 8M442 209l-8 8 8 8" fill="none" stroke="#666" stroke-width="3"/></svg>
      <span style="width:84px;letter-spacing:-.4px">carto_qgis_2018</span>
      <svg width="22" height="20" viewBox="717 186 66 60"><path d="M747 210l8 8-8 8" fill="none" stroke="#777" stroke-width="4"/></svg>
      <span>qgis_project</span>
      <svg class="ms-auto" width="37" height="20" viewBox="147 186 111 60" fill="none" stroke="#767676"><path d="M157 212l11 11 11-11" stroke-width="4.500"/><path d="M196 184v66" stroke="#d9d9d9" stroke-width="3"/><path d="M221 209a12 12 0 1 0 16 1" stroke-width="4.500"/><path d="M214 205h12v12" stroke-width="4"/></svg>
    </div>
    <div class="addr d-flex align-items-center justify-content-between" style="width:202px;margin-left:11px;padding-left:8px;color:#6d6d6d"><span>Search qgis_project</span><svg width="30" height="20" viewBox="807 186 90 60" fill="none" stroke="#666"><circle cx="862" cy="212" r="9" stroke-width="4.500"/><path d="M855 219l-15 14" stroke-width="5"/></svg></div>
  </div>
  <div class="cmd d-flex align-items-center">
    <span style="margin-left:18px;width:52px">Organize</span>
    <svg width="39" height="30" viewBox="234 273 117 90"><path d="M236 313h24l-12 12z" fill="#1e395b"/></svg>
    <span>New folder</span>
    <svg class="ms-auto" width="100" height="30" viewBox="636 273 300 90"><rect x="658" y="301" width="40" height="30" fill="#fff" stroke="#999" stroke-width="3"/><path d="M663 306h30v10h-30z" fill="#6aaee0"/><path d="M663 312l12 5 18-1v10h-30z" fill="#33645e"/><path d="M663 323h30v4h-30z" fill="#2f7fc2"/><path d="M731 312h24l-12 13z" fill="#1e395b"/><circle cx="867" cy="318" r="23" fill="#0a63c0" stroke="#084a92" stroke-width="3"/><text x="867" y="331" text-anchor="middle" font-family="Open Sans" font-weight="700" font-size="36" fill="#fff">?</text></svg>
  </div>
  <div class="dbody d-flex">
    <nav class="navtree">
      <div class="nitem d-flex align-items-center" style="padding-left:23px"><svg width="22" height="24" viewBox="93 390 66 72"><rect x="97" y="407" width="46" height="31" fill="#6cc4fb" stroke="#2f7fb8" stroke-width="3"/><path d="M108 440h23M96 448h48" stroke="#8fa1b3" stroke-width="3"/></svg>This PC</div>
      <div class="nitem d-flex align-items-center"><svg width="21" height="24" viewBox="120 462 63 72"><rect x="121" y="481" width="46" height="33" fill="#1ea1f7" stroke="#0d5e9c" stroke-width="3"/><path d="M123 511h42" stroke="#fff" stroke-width="3" stroke-dasharray="12 3 2 12"/></svg>Desktop</div>
      <div class="nitem d-flex align-items-center"><svg width="21" height="24" viewBox="120 534 63 72"><path d="M128 547h25l8 8v37h-33z" fill="#fff" stroke="#8c8c8c" stroke-width="3"/><path d="M134 562h8l3-8 3 12M134 570h22M134 577h9M147 577h9M134 584h22" stroke="#2f7fc2" stroke-width="3" fill="none"/></svg>Documents</div>
      <div class="nitem d-flex align-items-center"><svg width="21" height="24" viewBox="120 606 63 72"><path d="M135 619h18v24h13l-22 22-22-22h13z" fill="#3a94e0" stroke="#2679c0" stroke-width="2"/></svg>Downloads</div>
      <div class="nitem d-flex align-items-center"><svg width="21" height="24" viewBox="120 678 63 72"><ellipse cx="135" cy="730" rx="10" ry="7" fill="#0e92e8"/><path d="M143 730v-38q3 14 12 18 6 8-2 20" fill="none" stroke="#0e92e8" stroke-width="5"/></svg>Music</div>
      <div class="nitem d-flex align-items-center"><svg width="21" height="24" viewBox="120 30 63 72"><rect x="121" y="50" width="46" height="32" fill="#fff" stroke="#999" stroke-width="3"/><path d="M126 55h36v14h-36z" fill="#7ec0ee"/><path d="M126 63q16 2 22 6h14v8h-36z" fill="#33655c"/></svg>Pictures</div>
      <div class="nitem d-flex align-items-center"><svg width="21" height="24" viewBox="120 102 63 72"><path d="M123 118h42v43h-42z" fill="#333"/><path d="M127 118v43M161 118v43" stroke="#ddd" stroke-width="4" stroke-dasharray="3 3"/><path d="M132 120h24v18h-24zM132 141h24v18h-24z" fill="#2859b8"/><circle cx="147" cy="130" r="6" fill="#d9b52c"/><path d="M134 136h9M136 154l8-8 10 8" stroke="#c0572e" stroke-width="4" fill="none"/></svg>Videos</div>
      <div class="nitem d-flex align-items-center"><svg width="21" height="24" viewBox="120 174 63 72"><path d="M120 195h8v7h-8zM131 195h8v7h-8zM120 205h8v7h-8zM131 205h8v7h-8z" fill="#19aaf0"/><use href="#disk" x="123" y="207"/></svg>Local Disk (C:)</div>
      <div class="nitem d-flex align-items-center" style="letter-spacing:-.35px"><svg width="21" height="24" viewBox="120 246 63 72"><path d="M140 290h9v6h15v8h-39v-8h15z" fill="#45b649"/><use href="#disk" x="123" y="267"/></svg>vboxshared (\\vb</div>
      <div class="nitem d-flex align-items-center" style="background:#d9d9d9"><svg width="21" height="24" viewBox="120 318 63 72"><use href="#disk" x="123" y="351"/></svg>StorageDisk (F:)</div>
    </nav>
    <div class="sbar d-flex flex-column justify-content-between position-relative">
      <svg width="15" height="20" viewBox="0 0 15 20"><path d="M4 11.500L7.500 8l3.500 3.500" fill="none" stroke="#505050" stroke-width="2"/></svg>
      <div class="thumb position-absolute top-0"></div>
      <svg width="15" height="16" viewBox="0 0 15 16"><path d="M4 6l3.500 3.500L11 6" fill="none" stroke="#505050" stroke-width="2"/></svg>
    </div>
    <div class="files flex-fill text-center" style="padding-top:15px;color:#6d6d6d">No items match your search.</div>
  </div>
  <div class="dfoot position-relative">
    <div class="d-flex align-items-center" style="padding-top:11px"><span class="flabel" style="letter-spacing:-.4px">File name:</span><div class="fbox fname d-flex align-items-center justify-content-between"><span style="padding-left:5px;letter-spacing:-.45px">demo_x1.png<span style="border-left:1px solid #000;padding:2px 0"></span></span><svg width="16" height="20" viewBox="0 0 16 20"><path d="M4 8.500l4 4 4-4" fill="none" stroke="#555" stroke-width="1.200"/></svg></div></div>
    <div class="d-flex align-items-center" style="padding-top:2px"><span class="flabel">Save as type:</span><div class="fbox ftype d-flex align-items-center justify-content-between"><span style="padding-left:3px">PNG format (*.png *.PNG)</span><svg width="16" height="20" viewBox="0 0 16 20"><path d="M4 8.500l4 4 4-4" fill="none" stroke="#555" stroke-width="1.200"/></svg></div></div>
    <div class="d-flex" style="padding:21px 18px 0 9px">
      <svg width="23" height="24" viewBox="51 656 69 72"><defs><linearGradient id="hf" x2="0" y2="1"><stop stop-color="#fff"/><stop offset="1" stop-color="#c8cfe0"/></linearGradient></defs><circle cx="82" cy="695" r="23" fill="url(#hf)" stroke="#a3abbf" stroke-width="3"/><path d="M70 699l12-12 12 12z" fill="#1f3f8f"/></svg>
      <span style="line-height:29px">Hide Folders</span>
      <button class="btn wbtn dflt ms-auto">Save</button><button class="btn wbtn" style="margin-left:14px">Cancel</button>
    </div>
    <svg class="position-absolute bottom-0 end-0" width="12" height="12" viewBox="812 342 36 36" fill="#b8b8b8"><path d="M830 346h6v6h-6zM821 355h6v6h-6zM830 355h6v6h-6zM812 364h6v6h-6zM821 364h6v6h-6zM830 364h6v6h-6z"/></svg>
  </div>
</section>

<!-- shared symbols -->
<svg width="0" height="0" class="position-absolute">
  <symbol id="qlogo" overflow="visible"><path d="M19 18q10-6 16 4l-4 27q-14 4-18-8-1-16 6-23z" fill="#eef2a0" stroke="#c3d33a" stroke-width="6"/><path d="M30 38q4 14 16 14" stroke="#e0e55c" stroke-width="6" fill="none"/><path d="M24 36l8-13-3-3 18-10-3 20-5-3-9 13z" fill="#2b8a2b"/><path d="M13 42l10 3-6 6z" fill="#2b6a2b"/></symbol>
  <symbol id="grip" overflow="visible"><path d="M3 1v88" stroke="#c3c3c3" stroke-width="5" stroke-dasharray="5 9"/><path d="M11 8v82" stroke="#c3c3c3" stroke-width="5" stroke-dasharray="5 9"/></symbol>
  <symbol id="cur" overflow="visible"><path d="M0 0l9 34 8-8 11 15 8-6-11-14 10-4z" fill="#fff" stroke="#555" stroke-width="3"/></symbol>
  <symbol id="chk" overflow="visible"><path d="M1 1h35v35H1z" fill="#fff" stroke="#b5b5b5" stroke-width="3"/><path d="M9 10l19 18M28 10L9 28" stroke="#000" stroke-width="8"/></symbol>
  <symbol id="disk" overflow="visible"><path d="M6 0h30l5 12H1z" fill="#d9d9d9"/><path d="M1 12h40v11H1z" fill="#3a3a3a"/><path d="M30 16h5v4h-5z" fill="#4be04b"/></symbol>
</svg>
<script src="https://cdn.jsdelivr.net/npm/bootstrap@5.3.0/dist/js/bootstrap.bundle.min.js"></script>
</body>
</html>
